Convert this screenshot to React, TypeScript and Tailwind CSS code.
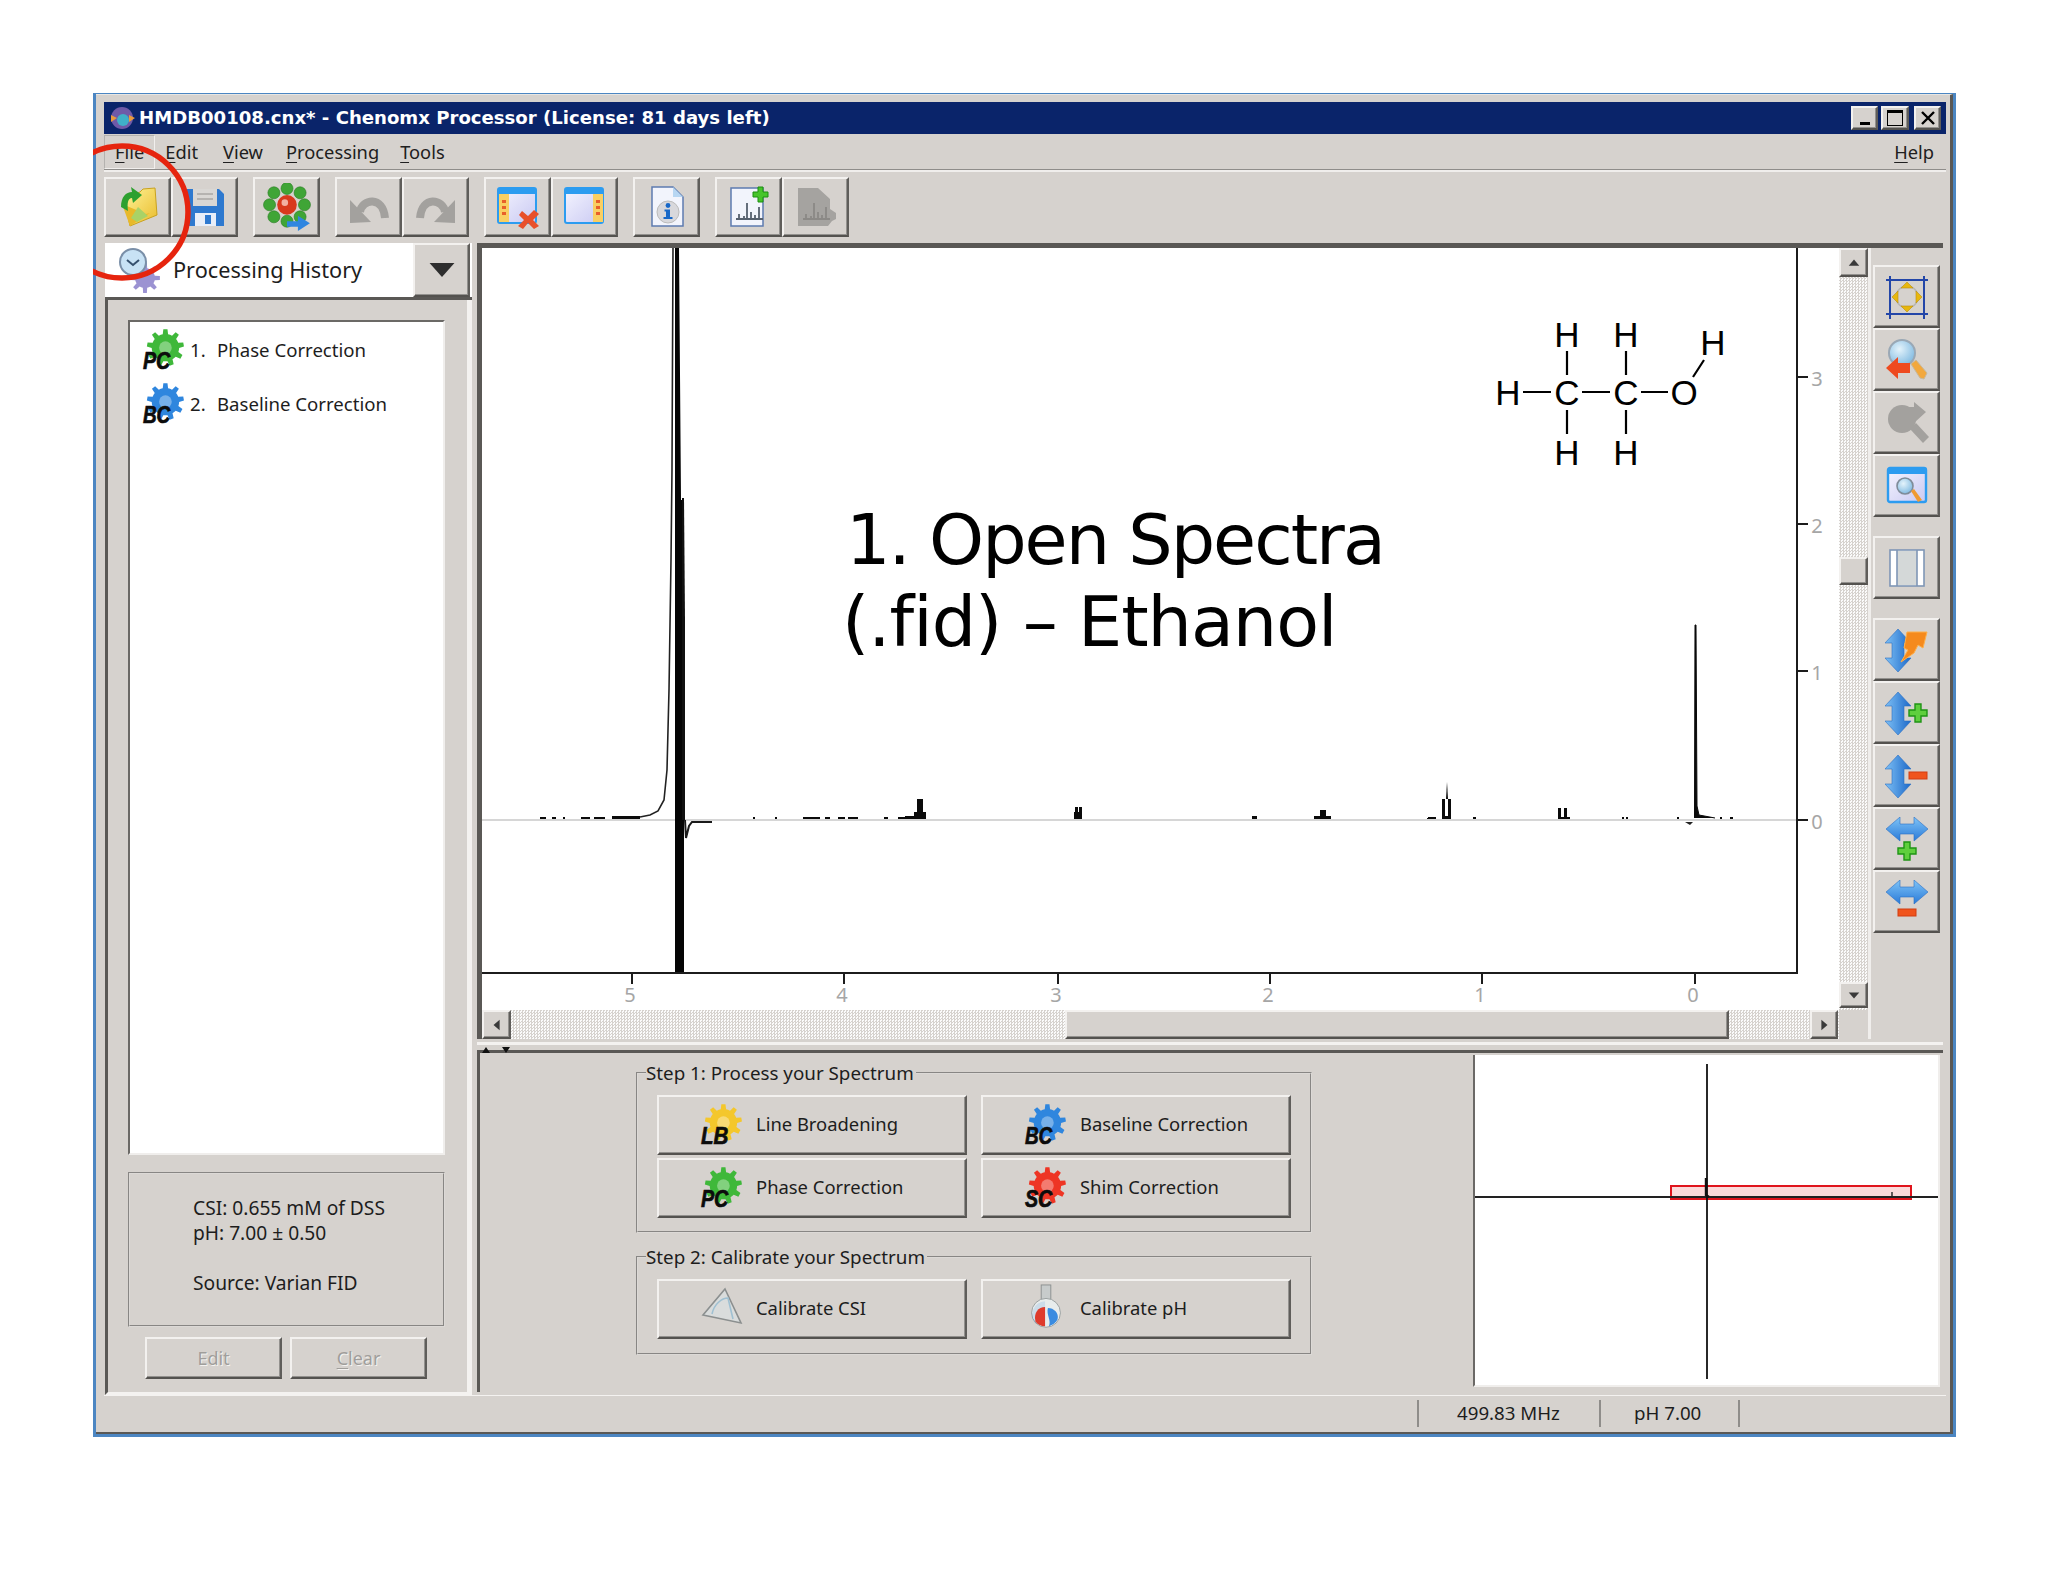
import type { ReactNode } from "react";

const raised =
  "border-2 border-t-[#f3f1ef] border-l-[#f3f1ef] border-r-[#5f5d5a] border-b-[#54524f] bg-[#d6d2ce] shadow-[inset_-1px_-1px_0_#93918e]";
const uiFont = "font-['Noto_Sans',sans-serif]";

const gearPath = (cx: number, cy: number, r: number, R: number, teeth: number) => {
  const pts: string[] = [];
  const step = (Math.PI * 2) / teeth;
  for (let i = 0; i < teeth; i++) {
    const a = i * step - Math.PI / 2;
    const list: [number, number][] = [
      [r, a - step * 0.5],
      [r, a - step * 0.28],
      [R, a - step * 0.16],
      [R, a + step * 0.16],
      [r, a + step * 0.28],
    ];
    list.forEach(([rad, ang]) => {
      pts.push(`${(cx + Math.cos(ang) * rad).toFixed(2)} ${(cy + Math.sin(ang) * rad).toFixed(2)}`);
    });
  }
  return `M${pts.join("L")}Z`;
};

const Defs = () => (
  <svg className="absolute size-0">
    <defs>
      <linearGradient id="blueV" x1="0" y1="0" x2="1" y2="0">
        <stop offset="0" stopColor="#7ec0f5" />
        <stop offset="1" stopColor="#1c69c9" />
      </linearGradient>
      <linearGradient id="blueH" x1="0" y1="0" x2="0" y2="1">
        <stop offset="0" stopColor="#7fc4f7" />
        <stop offset="1" stopColor="#2a7ad8" />
      </linearGradient>
      <linearGradient id="lav" x1="0" y1="0" x2="1" y2="1">
        <stop offset="0" stopColor="#f5f5ff" />
        <stop offset="1" stopColor="#c9c9f2" />
      </linearGradient>
      <linearGradient id="folder" x1="0" y1="0" x2="1" y2="1">
        <stop offset="0" stopColor="#fff49a" />
        <stop offset="1" stopColor="#e9bb2b" />
      </linearGradient>
      <radialGradient id="lens" cx="0.4" cy="0.35" r="0.7">
        <stop offset="0" stopColor="#e4f3fb" />
        <stop offset="1" stopColor="#7db8e0" />
      </radialGradient>
    </defs>
  </svg>
);

// the viewBox runs past the 42px icon box so the label's descent stays inside the svg
const Gear = ({ color, label }: { color: string; label: string }) => (
  <svg viewBox="-3 0 46 50" className="-mb-[7px] -ml-[3px] -mr-[0px] h-[49px] w-[45px] shrink-0">
    <path d={gearPath(24, 19, 14, 19, 9)} fill={color} />
    <circle cx="24" cy="19" r="6.5" fill="#fff" fillOpacity="0.35" />
    <text
      x="1"
      y="41"
      fontFamily="'Liberation Sans',sans-serif"
      fontWeight="700"
      fontStyle="italic"
      fontSize="25"
      textLength="28"
      lengthAdjust="spacingAndGlyphs"
      fill="#0c0c0c"
      stroke="#0c0c0c"
      strokeWidth="0.7"
    >
      {label}
    </text>
  </svg>
);

const Icon = ({ children, size = 44 }: { children: ReactNode; size?: number }) => (
  <svg viewBox="0 0 44 44" style={{ width: size, height: size }}>
    {children}
  </svg>
);

const OpenIcon = () => (
  <Icon>
    <path d="M8 14 L24 7 L27 4 L39 3 L41 30 L14 41 Z" fill="url(#folder)" stroke="#c9a21f" />
    <path d="M6 19 L30 29 L34 28 L14 41 Z" fill="#e8b92a" />
    <path d="M15 33 L22 22 L32 31 L21 37 Z" fill="#a9d267" />
    <path d="M5 22 C5 12 10 7 16 7 L15 2 L26 10 L17 18 L16 13 C12 13 11 18 12 26 Z" fill="#2da02f" />
  </Icon>
);

const SaveIcon = () => (
  <Icon>
    <path d="M3 4 H36 L41 9 V41 H3 Z" fill="#2e79cf" />
    <rect x="10" y="4" width="24" height="17" fill="#d9d7d4" />
    <path d="M14 9 H30 M14 14 H30" stroke="#b5b3b0" strokeWidth="2" />
    <rect x="12" y="28" width="21" height="13" fill="#e8eef8" />
    <rect x="22" y="30" width="6" height="9" fill="#2e79cf" />
  </Icon>
);

const MoleculeIcon = () => (
  <Icon size={48}>
    {[
      [10, 9],
      [22, 5],
      [34, 9],
      [38, 20],
      [34, 31],
      [22, 35],
      [10, 31],
      [6, 20],
    ].map(([cx, cy]) => (
      <circle key={`${cx}-${cy}`} cx={cx} cy={cy} r="5.5" fill="#3fa536" stroke="#2b7f25" strokeWidth="0.6" />
    ))}
    <circle cx="22" cy="20" r="9" fill="#d8391d" />
    <circle cx="20" cy="18" r="3" fill="#f2b0a2" />
    <path d="M22 35 H32 V30 L43 37 L32 44 V40 H22 Z" fill="#2f86e0" />
  </Icon>
);

const UndoIcon = ({ flip, color = "#a3a19e" }: { flip?: boolean; color?: string }) => (
  <Icon>
    <g transform={flip ? "translate(44 0) scale(-1 1)" : undefined}>
      <path d="M13 27 C15 14 36 10 38 33" fill="none" stroke={color} strokeWidth="8" />
      <path d="M3 15 L3 38 L24 37 Z" fill={color} />
    </g>
  </Icon>
);

const PanelIcon = ({ side, close }: { side: "left" | "right"; close?: boolean }) => (
  <Icon>
    <rect x="2" y="3" width="38" height="35" rx="2" fill="url(#lav)" stroke="#2c9cf0" strokeWidth="2" />
    <rect x="2" y="3" width="38" height="6" fill="#2c9cf0" />
    <rect x={side === "left" ? 3 : 30} y="9" width="10" height="28" fill="#f9cf62" />
    {[15, 21, 27].map((y) => (
      <rect key={y} x={side === "left" ? 6 : 33} y={y} width="4" height="3" fill="#e8602a" />
    ))}
    {close && (
      <path
        d="M26 26 L32 31 L38 25 L43 29 L37 35 L43 41 L38 44 L32 38 L27 44 L22 41 L28 35 L23 30 Z"
        fill="#e8502a"
      />
    )}
  </Icon>
);

const InfoIcon = () => (
  <Icon>
    <path d="M7 2 H28 L38 12 V41 H7 Z" fill="#f2f4fc" stroke="#5d7bb0" strokeWidth="1.5" />
    <path d="M28 2 V12 H38 Z" fill="#b7d6f2" />
    <circle cx="23" cy="27" r="11" fill="#d8d8dc" stroke="#bbb" />
    <circle cx="23" cy="20.5" r="2.4" fill="#1868c8" />
    <path d="M19.5 24.5 H25 V32 H27.5 V34 H18.5 V32 H21 V26.5 H19.5 Z" fill="#1868c8" />
  </Icon>
);

const Peaks = ({ color = "#56606e" }: { color?: string }) => (
  <path
    d="M9 34 H36 M12 34 V29 M17 34 V31 M20 34 V18 M24 34 V27 M28 34 V30 M32 34 V22"
    stroke={color}
    strokeWidth="1.8"
    fill="none"
  />
);

const AddDocIcon = () => (
  <Icon>
    <rect x="4" y="3" width="32" height="38" fill="#f2f4fc" stroke="#5d7bb0" strokeWidth="1.5" />
    <Peaks />
    <path d="M26 6 H31 V1 H36 V6 H41 V11 H36 V16 H31 V11 H26 Z" transform="translate(0 1)" fill="#47c52a" stroke="#1d8f10" />
  </Icon>
);

const RemoveDocIcon = () => (
  <Icon>
    <path d="M4 3 H24 L36 14 V24 L42 28 V34 L38 36 L34 41 H4 Z" fill="#a5a3a0" />
    <Peaks color="#8b8986" />
  </Icon>
);

const FitIcon = () => (
  <Icon>
    <circle cx="22" cy="22" r="11" fill="none" stroke="#b8b6b2" strokeWidth="1.5" />
    <path d="M5 1 V44 M39 1 V44 M1 5 H43 M1 39 H43" stroke="#2346a8" strokeWidth="2" />
    <path d="M22 7 L28 13 H16 Z M22 37 L28 31 H16 Z M7 22 L13 16 V28 Z M37 22 L31 16 V28 Z" fill="#e8b70e" stroke="#b98f10" strokeWidth="0.6" />
  </Icon>
);

const MagnifierIcon = ({ disabled, flip }: { disabled?: boolean; flip?: boolean }) => (
  <Icon>
    {disabled ? (
      <g fill="#a3a19e">
        <circle cx="17" cy="18" r="14" />
        <path d="M25 28 L31 22 L44 36 L38 42 Z" />
        <path d="M21 6 H29 V1 L41 11 L29 22 V16 H21 Z" />
      </g>
    ) : (
      <g transform={flip ? "translate(44 0) scale(-1 1)" : undefined}>
        <circle cx="17" cy="15" r="13" fill="url(#lens)" stroke="#9aa8b5" strokeWidth="2" />
        <path d="M26 26 L31 22 L42 35 L39 41 L35 40 Z" fill="#f2a83d" stroke="#c8b89a" />
        <path d="M1 30 L13 19 V25 H25 V35 H13 V41 Z" fill="#ee4a1f" />
      </g>
    )}
  </Icon>
);

const WindowZoomIcon = () => (
  <Icon>
    <rect x="3" y="4" width="38" height="34" rx="2" fill="url(#lav)" stroke="#2c9cf0" strokeWidth="2.4" />
    <rect x="3" y="4" width="38" height="6" fill="#2c9cf0" />
    <circle cx="20" cy="22" r="8" fill="url(#lens)" stroke="#7f8c99" strokeWidth="1.6" />
    <path d="M26 27 L29 25 L37 36 L33 38 Z" fill="#ef9a32" />
  </Icon>
);

const ColumnsIcon = () => (
  <Icon>
    <rect x="5" y="4" width="34" height="36" fill="#fff" stroke="#7f96b6" strokeWidth="1.6" />
    <rect x="12" y="5" width="20" height="34" fill="#d4d8d8" />
    <path d="M12 4 V40 M32 4 V40" stroke="#7f96b6" strokeWidth="1.6" />
  </Icon>
);

const VArrow = () => (
  <path d="M13 1 L26 15 H19 V30 H26 L13 44 L0 30 H7 V15 H0 Z" fill="url(#blueV)" stroke="#2a6fc5" strokeWidth="0.6" />
);
const HArrow = () => (
  <path d="M1 12 L15 0 V7 H29 V0 L43 12 L29 24 V17 H15 V24 Z" fill="url(#blueH)" stroke="#2a6fc5" strokeWidth="0.6" />
);
const Plus = ({ x, y }: { x: number; y: number }) => (
  <path
    d={`M${x + 6} ${y} H${x + 12} V${y + 6} H${x + 18} V${y + 12} H${x + 12} V${y + 18} H${x + 6} V${y + 12} H${x} V${y + 6} H${x + 6} Z`}
    fill="#5fcf3d"
    stroke="#1f9414"
    strokeWidth="1.4"
  />
);
const Minus = ({ x, y }: { x: number; y: number }) => (
  <rect x={x} y={y} width="18" height="7" fill="#f0541c" stroke="#d23c10" />
);

const StepBolt = () => (
  <Icon>
    <VArrow />
    <path d="M22 4 H42 L38 20 L33 17 L29 25 L16 34 L23 22 L19 20 Z" fill="#f58a1d" stroke="#ffb04a" />
  </Icon>
);

const ToolButton = ({ children, className = "w-[67px] h-[60px]" }: { children: ReactNode; className?: string }) => (
  <button className={`${raised} ${className} flex items-center justify-center`}>{children}</button>
);

const SideButton = ({ children }: { children: ReactNode }) => (
  <button className={`${raised} h-[63px] w-[67px] flex items-center justify-center`}>{children}</button>
);

const Menu = ({ first, rest, className = "" }: { first: string; rest: string; className?: string }) => (
  <span className={className}>
    <span className="underline underline-offset-[3px]">{first}</span>
    {rest}
  </span>
);

const ActionButton = ({ icon, label }: { icon: ReactNode; label: string }) => (
  <button className={`${raised} flex h-[60px] w-[310px] items-center pl-[41px]`}>
    <span className="flex w-[56px] shrink-0 items-center">{icon}</span>
    <span className="-mt-[2px] text-[18.4px] leading-none text-[#1d1d1d]">{label}</span>
  </button>
);

const Triangle = () => (
  <svg viewBox="0 0 44 44" className="size-[44px]">
    <path d="M25 2 L41 36 L3 28 Z" fill="#d9dcdc" stroke="#8b8f8f" strokeWidth="1.6" />
    <path d="M12 27 C14 17 22 11 28 11 L33 32" fill="none" stroke="#9fc0d2" strokeWidth="1.6" />
  </svg>
);

const Flask = () => (
  <svg viewBox="0 0 44 52" className="h-[50px] w-[44px]">
    <rect x="17" y="1" width="10" height="15" fill="#c7cbcb" stroke="#8d9090" />
    <circle cx="22" cy="30" r="15" fill="#e8ecec" stroke="#9aa0a0" />
    <path d="M21 18 A14 14 0 0 0 11 41 L21 38 Z" fill="#2f83e0" opacity="0.15" />
    <path d="M21 24 C14 24 9 30 11 39 C13 42 17 44 21 44 Z" fill="#de3b2c" />
    <path d="M24 25 C30 25 36 30 34 37 C32 41 28 43 25 44 C28 38 22 32 24 25 Z" fill="#3a8be0" />
  </svg>
);

const Spectrum = () => {
  const blobs: [number, number, number][] = [
    [540, 546, 817], [552, 556, 817], [563, 565, 817], [581, 590, 817], [594, 605, 817], [612, 640, 816],
    [753, 755, 817], [775, 777, 817], [803, 820, 817], [825, 830, 817], [838, 845, 817], [848, 858, 817],
    [884, 888, 817], [898, 905, 817], [905, 915, 816], [914, 926, 812], [917, 923, 799],
    [1074, 1082, 812], [1075, 1078, 807], [1079, 1082, 807], [1252, 1257, 816], [1314, 1331, 816],
    [1320, 1326, 810], [1428, 1436, 817], [1427, 1434, 818], [1442, 1451, 816], [1442, 1445, 799], [1448, 1451, 799],
    [1473, 1476, 817], [1558, 1570, 817], [1558, 1561, 808], [1564, 1567, 808], [1622, 1624, 817], [1626, 1628, 817],
    [1677, 1679, 817], [1720, 1722, 817], [1730, 1733, 817],
  ];
  const xTicks = [
    [632, "5"], [844, "4"], [1058, "3"], [1270, "2"], [1482, "1"], [1695, "0"],
  ] as const;
  const yTicks = [
    [377, "3"], [524, "2"], [671, "1"], [820, "0"],
  ] as const;
  return (
    <svg viewBox="482 248 1357 762" className="block h-[762px] w-[1357px] bg-white">
      <line x1="482" y1="820" x2="1797" y2="820" stroke="#c9c9c9" strokeWidth="1.6" />
      {blobs.map(([a, b, t]) => (
        <rect key={`${a}-${t}`} x={a} y={t} width={b - a} height={819 - t} fill="#0b0b0b" />
      ))}
      <path d="M1446 799 L1447 782 L1448 799 Z" fill="#0b0b0b" />
      <path
        d="M640 817 L650 815 L658 811 L664 800 L667 770 L669 690 L671 560 L672 470 L673 248"
        fill="none"
        stroke="#222"
        strokeWidth="1.6"
      />
      <path d="M675 248 H679 L681 500 H683 L684 820 V973 H675 Z" fill="#050505" />
      <path d="M682 498 L684 498 L685 620 L685 820 H682 Z" fill="#111" />
      <path d="M685 820 L686 838 L689 826 L692 822 H712" fill="none" stroke="#1a1a1a" strokeWidth="2" />
      <path d="M1694.5 818 L1695 625 L1696 625 L1697 806 L1699 815 L1715 818" fill="#0a0a0a" stroke="#0a0a0a" strokeWidth="1" />
      <path d="M1685 822 H1693 L1690 825 Z" fill="#222" />
      <path d="M1797 248 V973 H482" fill="none" stroke="#1c1c1c" strokeWidth="2" />
      {xTicks.map(([x, t]) => (
        <g key={t}>
          <line x1={x} y1="973" x2={x} y2="984" stroke="#1c1c1c" strokeWidth="2" />
          <text x={x - 2} y="1002" textAnchor="middle" fontFamily="'Noto Sans',sans-serif" fontSize="20" fill="#a6a6a6">
            {t}
          </text>
        </g>
      ))}
      {yTicks.map(([y, t]) => (
        <g key={t}>
          <line x1="1797" y1={y} x2="1808" y2={y} stroke="#1c1c1c" strokeWidth="2" />
          <text x="1817" y={y + 9} textAnchor="middle" fontFamily="'Noto Sans',sans-serif" fontSize="20" fill="#a6a6a6">
            {t}
          </text>
        </g>
      ))}
      <g fontFamily="'Liberation Sans',sans-serif" fontSize="35" fill="#000" textAnchor="middle">
        <text x="1567" y="347">H</text>
        <text x="1626" y="347">H</text>
        <text x="1713" y="355">H</text>
        <text x="1508" y="405">H</text>
        <text x="1567" y="405">C</text>
        <text x="1626" y="405">C</text>
        <text x="1684" y="405">O</text>
        <text x="1567" y="465">H</text>
        <text x="1626" y="465">H</text>
      </g>
      <path
        d="M1523 392 H1551 M1582 392 H1610 M1641 392 H1668 M1567 351 V375 M1626 351 V375 M1567 410 V434 M1626 410 V434 M1693 377 L1704 360"
        stroke="#000"
        strokeWidth="2.2"
        fill="none"
      />
    </svg>
  );
};

const track = "bg-[repeating-conic-gradient(#d6d2ce_0_25%,#fbfbfb_0_50%)] bg-[length:3px_3px]";

const ScrollButton = ({ dir, className }: { dir: "up" | "down" | "left" | "right"; className: string }) => {
  const d = {
    up: "M2 11 L8 4 L14 11 Z",
    down: "M2 5 L14 5 L8 12 Z",
    left: "M11 2 L11 14 L4 8 Z",
    right: "M5 2 L12 8 L5 14 Z",
  }[dir];
  return (
    <div className={`${raised} ${className} flex shrink-0 items-center justify-center`}>
      <svg viewBox="0 0 16 16" className="size-[14px]">
        <path d={d} fill="#3a3a3a" />
      </svg>
    </div>
  );
};

const Group = ({ title, children, className }: { title: string; children: ReactNode; className: string }) => (
  <fieldset className={`${className} rounded-none border-2 border-[#dcd9d6] [border-style:groove] px-[19px]`}>
    <legend className="-ml-[11px] px-0 pr-[2px] text-[18.8px] leading-none text-[#1d1d1d]">{title}</legend>
    {children}
  </fieldset>
);

export default function App() {
  return (
    <div className={`relative h-[1582px] w-[2048px] overflow-hidden bg-white pl-[93px] pt-[93px] ${uiFont}`}>
      <Defs />
      <div className="relative h-[1344px] w-[1863px] border-b-[3px] border-l-[3px] border-r-[3px] border-t-[1px] border-[#4c86c2]">
        <div className="h-full border-b-[2px] border-r-[3px] border-t-[1px] border-[#5a5855] border-t-[#e8e6e3] bg-[#d6d2ce] pl-[8px] pr-[4px] pt-[7px]">
          {/* title bar */}
          <div className="flex h-[32px] items-center bg-[#0a246a] pl-[4px] pr-[5px]">
            <svg viewBox="0 0 28 28" className="size-[28px] shrink-0">
              <circle cx="14" cy="14" r="11" fill="#6f5aa8" />
              <circle cx="15" cy="16" r="6" fill="#3fb0c8" />
              <path d="M3 11 L9 14 L3 18 Z M21 11 L27 14 L21 18 Z" fill="#e99a3c" />
            </svg>
            <span className="ml-[3px] flex-1 font-['DejaVu_Sans',sans-serif] text-[18.1px] font-bold leading-none text-white">
              HMDB00108.cnx* - Chenomx Processor (License: 81 days left)
            </span>
            <div className="flex h-[24px] gap-[3px]">
              <button className={`${raised} relative w-[27px]`}>
                <span className="absolute bottom-[3px] left-[7px] h-[3px] w-[10px] bg-black" />
              </button>
              <button className={`${raised} flex w-[28px] items-center justify-center`}>
                <span className="h-[16px] w-[16px] border-[1.5px] border-t-[3px] border-black" />
              </button>
              <button className={`${raised} ml-[2px] flex w-[27px] items-center justify-center text-[18px] font-bold leading-none text-black`}>
                <svg viewBox="0 0 14 14" className="size-[14px]">
                  <path d="M1 1 L13 13 M13 1 L1 13" stroke="#000" strokeWidth="2.4" />
                </svg>
              </button>
            </div>
          </div>

          {/* menu bar */}
          <div className="flex h-[38px] items-center justify-between border-b-2 border-b-[#f0eeec] text-[18.3px] leading-none text-[#202020] shadow-[inset_0_-1px_0_#8f8d8a]">
            <div className="flex h-full items-center">
              <Menu first="F" rest="ile" className="border border-[#b4b2af] border-b-[#f1efed] border-r-[#f1efed] px-[10px] py-[7px]" />
              <Menu first="E" rest="dit" className="ml-[10px]" />
              <Menu first="V" rest="iew" className="ml-[25px]" />
              <Menu first="P" rest="rocessing" className="ml-[23px]" />
              <Menu first="T" rest="ools" className="ml-[21px]" />
            </div>
            <Menu first="H" rest="elp" className="mr-[12px]" />
          </div>

          {/* toolbar */}
          <div className="mt-[5px] flex gap-[15px]">
            <div className="flex">
              <ToolButton><OpenIcon /></ToolButton>
              <ToolButton><SaveIcon /></ToolButton>
            </div>
            <ToolButton><MoleculeIcon /></ToolButton>
            <div className="flex">
              <ToolButton><UndoIcon /></ToolButton>
              <ToolButton><UndoIcon flip /></ToolButton>
            </div>
            <div className="flex">
              <ToolButton><PanelIcon side="left" close /></ToolButton>
              <ToolButton><PanelIcon side="right" /></ToolButton>
            </div>
            <ToolButton><InfoIcon /></ToolButton>
            <div className="flex">
              <ToolButton><AddDocIcon /></ToolButton>
              <ToolButton><RemoveDocIcon /></ToolButton>
            </div>
          </div>

          {/* main area */}
          <div className="mr-[3px] mt-[6px] flex h-[1152px] gap-[5px] pl-[1px]">
            {/* left column */}
            <div className="flex w-[367px] flex-col">
              <div className="flex h-[57px] border-b-[3px] border-[#5a5855] bg-white">
                <div className="flex flex-1 items-center">
                  <svg viewBox="0 0 48 48" className="ml-[10px] size-[48px] shrink-0">
                    <path d={gearPath(30, 32, 10, 15, 8)} fill="#9b92d2" />
                    <circle cx="18" cy="16" r="13" fill="#c8e2f5" stroke="#7a8fa8" strokeWidth="2" />
                    <path d="M12 14 L18 19 L24 14" fill="none" stroke="#35506e" strokeWidth="2" />
                  </svg>
                  <span className="ml-[10px] text-[21.7px] leading-none text-[#1d1d1d]">Processing History</span>
                </div>
                <button className={`${raised} mr-[2px] flex w-[57px] items-center justify-center`}>
                  <svg viewBox="0 0 30 18" className="h-[16px] w-[28px]">
                    <path d="M1 1 H29 L15 17 Z" fill="#2e2e2e" />
                  </svg>
                </button>
              </div>
              <div className="flex flex-1 flex-col border-b-[3px] border-l-[3px] border-r-[5px] border-[#5a5855] border-b-[#f4f2f0] border-r-[#f4f2f0] pl-[20px] pr-[22px] pt-[20px]">
                <div className="h-[835px] border-2 border-[#6b6966] border-b-[#f0eeec] border-r-[#f0eeec] bg-white pl-[12px] pt-[1px]">
                  {[
                    { n: "1.", label: "Phase Correction", gear: <Gear color="#3fb83a" label="PC" /> },
                    { n: "2.", label: "Baseline Correction", gear: <Gear color="#2f86de" label="BC" /> },
                  ].map((row) => (
                    <div key={row.n} className="flex h-[54px] items-center text-[18.6px] leading-none text-[#1d1d1d]">
                      {row.gear}
                      <span className="ml-[6px] w-[27px]">{row.n}</span>
                      <span>{row.label}</span>
                    </div>
                  ))}
                </div>
                <div className="mt-[17px] h-[155px] rounded-none border-2 border-[#dcd9d6] pl-[63px] pt-[21px] text-[19.2px] leading-[25px] text-[#1d1d1d] [border-style:groove]">
                  <div>CSI: 0.655 mM of DSS</div>
                  <div>pH: 7.00 ± 0.50</div>
                  <div className="mt-[25px]">Source: Varian FID</div>
                </div>
                <div className="mt-[10px] flex gap-[8px] pl-[17px] text-[18px] leading-none text-[#a09e9b]">
                  <button className={`${raised} h-[42px] w-[137px] [text-shadow:1px_1px_0_#f4f2f0]`}>Edit</button>
                  <button className={`${raised} h-[42px] w-[137px] [text-shadow:1px_1px_0_#f4f2f0]`}>
                    <span className="underline underline-offset-[3px]">C</span>lear
                  </button>
                </div>
              </div>
            </div>

            {/* right column */}
            <div className="flex min-w-0 flex-1 flex-col">
              <div className="flex h-[796px] border-t-[5px] border-[#5a5855]">
                <div className="relative grid h-[791px] w-[1391px] grid-cols-[1357px_29px] grid-rows-[762px_29px] border-l-[5px] border-[#5a5855]">
                  <Spectrum />
                  <div className={`flex h-[762px] flex-col ${track}`}>
                    <ScrollButton dir="up" className="h-[29px]" />
                    <div className="h-[280px]" />
                    <div className={`${raised} h-[28px]`} />
                    <div className="h-[397px]" />
                    <ScrollButton dir="down" className="h-[26px]" />
                  </div>
                  <div className={`flex h-[29px] ${track}`}>
                    <ScrollButton dir="left" className="w-[29px]" />
                    <div className="w-[554px]" />
                    <div className={`${raised} w-[664px]`} />
                    <div className="w-[81px]" />
                    <ScrollButton dir="right" className="w-[28px]" />
                  </div>
                  <div className="bg-[#d6d2ce]" />
                  {/* slide annotation, lies over the plot */}
                  <div className="absolute left-[364px] top-[251px] font-['DejaVu_Sans',sans-serif] text-[70px] leading-[82px] text-black">
                    <div className="tracking-[-2px]">1. Open Spectra</div>
                    <div className="-ml-[4px] tracking-[-1px]">(.fid) – Ethanol</div>
                  </div>
                </div>
                <div className="flex w-[75px] flex-col gap-[19px] border-l-[3px] border-[#f0eeec] pl-[2px] pt-[17px]">
                  <div className="flex flex-col">
                    <SideButton><FitIcon /></SideButton>
                    <SideButton><MagnifierIcon /></SideButton>
                    <SideButton><MagnifierIcon disabled /></SideButton>
                    <SideButton><WindowZoomIcon /></SideButton>
                  </div>
                  <SideButton><ColumnsIcon /></SideButton>
                  <div className="flex flex-col">
                    <SideButton><StepBolt /></SideButton>
                    <SideButton>
                      <Icon><VArrow /><Plus x={24} y={13} /></Icon>
                    </SideButton>
                    <SideButton>
                      <Icon><VArrow /><Minus x={24} y={18} /></Icon>
                    </SideButton>
                    <SideButton>
                      <Icon><HArrow /><Plus x={13} y={25} /></Icon>
                    </SideButton>
                    <SideButton>
                      <Icon><HArrow /><Minus x={13} y={29} /></Icon>
                    </SideButton>
                  </div>
                </div>
              </div>

              {/* splitter */}
              <div className="relative h-[14px] border-b-[3px] border-[#5a5855]">
                <div className="mt-[3px] h-[3px] bg-[#f4f2f0]" />
                <svg viewBox="0 0 32 8" className="ml-[3px] mt-[1px] h-[8px] w-[32px]">
                  <path d="M2 7 L6 1 L10 7 Z M22 1 H30 L26 7 Z" fill="#111" />
                </svg>
              </div>

              {/* bottom pane */}
              <div className="flex h-[339px] border-l-[3px] border-[#5a5855]">
                <div className="w-[993px] pl-[156px] pt-[11px]">
                  <Group title="Step 1: Process your Spectrum" className="h-[169px] w-[675px] pt-[12px]">
                    <div className="grid grid-cols-[310px_310px] gap-x-[14px] gap-y-[3px]">
                      <ActionButton icon={<Gear color="#f4c72c" label="LB" />} label="Line Broadening" />
                      <ActionButton icon={<Gear color="#2f86de" label="BC" />} label="Baseline Correction" />
                      <ActionButton icon={<Gear color="#3fb83a" label="PC" />} label="Phase Correction" />
                      <ActionButton icon={<Gear color="#ee3524" label="SC" />} label="Shim Correction" />
                    </div>
                  </Group>
                  <Group title="Step 2: Calibrate your Spectrum" className="mt-[15px] h-[107px] w-[675px] pt-[12px]">
                    <div className="grid grid-cols-[310px_310px] gap-x-[14px]">
                      <ActionButton icon={<Triangle />} label="Calibrate CSI" />
                      <ActionButton icon={<Flask />} label="Calibrate pH" />
                    </div>
                  </Group>
                </div>
                <div className="mt-[2px] h-[332px] w-[467px] border-b-[2px] border-l-[2px] border-r-[2px] border-[#6b6966] border-b-[#f0eeec] border-r-[#f0eeec] bg-white">
                  <svg viewBox="1475 1055 463 330" className="block h-[330px] w-[463px]">
                    <rect x="1671" y="1186" width="240" height="13" fill="#fbdada" stroke="#e0141c" strokeWidth="2" />
                    <line x1="1475" y1="1197" x2="1938" y2="1197" stroke="#222" strokeWidth="1.8" />
                    <line x1="1707" y1="1064" x2="1707" y2="1379" stroke="#111" strokeWidth="1.8" />
                    <path d="M1706 1178 V1195 L1709 1197" fill="none" stroke="#111" strokeWidth="2.4" />
                    <line x1="1892" y1="1192" x2="1892" y2="1197" stroke="#222" strokeWidth="1.4" />
                  </svg>
                </div>
              </div>
            </div>
          </div>

          {/* status bar */}
          <div className="flex h-[38px] items-center border-t border-t-[#f4f2f0] pb-[3px] text-[18.7px] leading-none text-[#1d1d1d]">
            <span className="ml-[1313px] h-[27px] w-[2px] bg-[#8f8d8a]" />
            <span className="ml-[38px] w-[142px]">499.83 MHz</span>
            <span className="h-[27px] w-[2px] bg-[#8f8d8a]" />
            <span className="ml-[33px] w-[104px]">pH 7.00</span>
            <span className="h-[27px] w-[2px] bg-[#8f8d8a]" />
          </div>
        </div>

        {/* red circle drawn on the slide around the open button */}
        <svg viewBox="0 0 120 160" className="pointer-events-none absolute -left-[3px] top-[45px] h-[160px] w-[120px]">
          <circle cx="29" cy="73" r="66" fill="none" stroke="#e6240e" strokeWidth="5.5" />
        </svg>
      </div>
    </div>
  );
}
